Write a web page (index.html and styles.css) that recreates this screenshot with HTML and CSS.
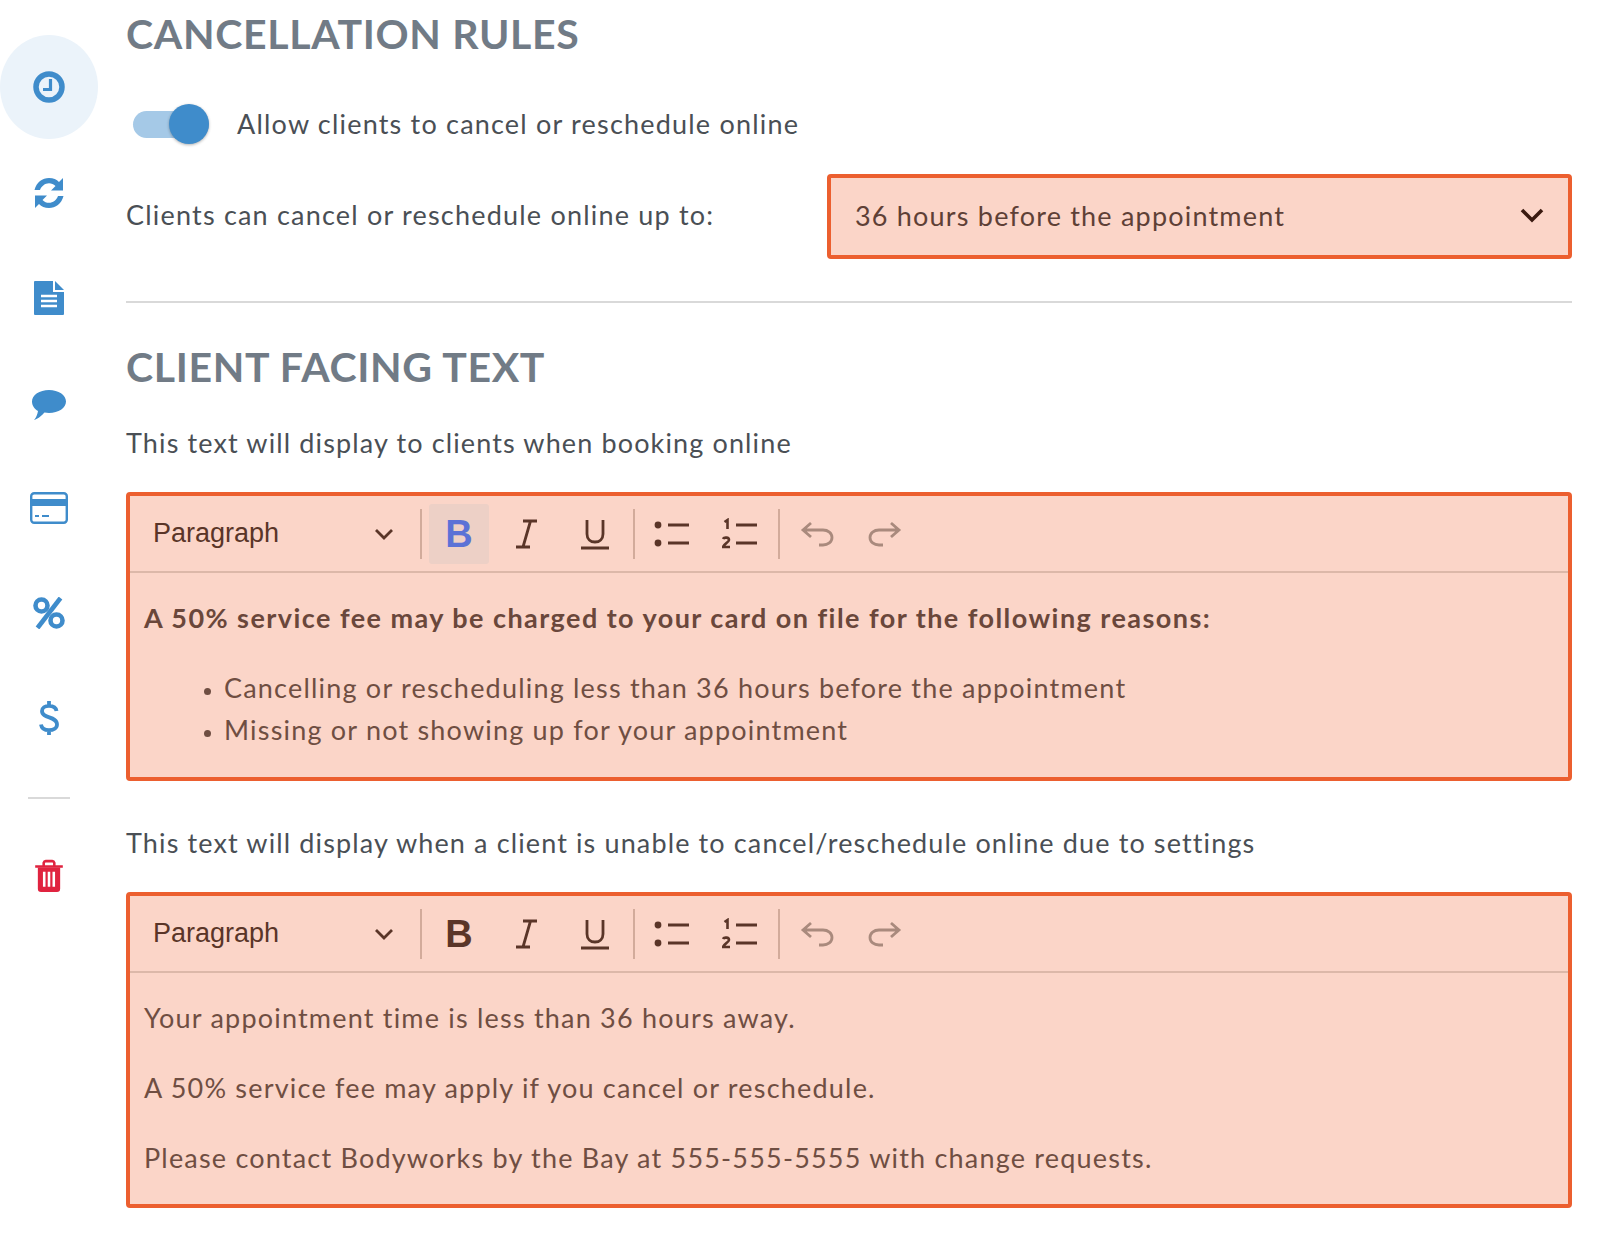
FILE: index.html
```html
<!DOCTYPE html>
<html lang="en">
<head>
<meta charset="utf-8">
<title>Cancellation rules</title>
<link rel="stylesheet" href="styles.css">
</head>
<body>
<div class="page">
  <nav class="side">
    <a class="nav-item active"><svg class="ic" viewBox="0 0 32 32"><circle cx="16" cy="16" r="13" fill="none" stroke="#3f8ccb" stroke-width="5.500"/><path d="M17.500 8v10.500H10" fill="none" stroke="#3f8ccb" stroke-width="3.200"/></svg></a>
    <a class="nav-item"><svg class="ic ic-sync" viewBox="0 0 32 32"><path d="M1.500 13C3.500 5 9.500 1 16 1c4.500 0 7.500 1.500 10 4L30 1v12.500H18l4.500-4.500C20.500 7 18.500 6.200 16 6.200c-4 0-7.500 2.800-9 6.800z" fill="#3f8ccb"/><path d="M30.500 19C28.500 27 22.500 31 16 31c-4.500 0-7.500-1.500-10-4l-4 4V18.500h12L9.500 23c2 2 4 2.800 6.500 2.800 4 0 7.500-2.800 9-6.800z" fill="#3f8ccb"/></svg></a>
    <a class="nav-item"><svg class="ic ic-doc" viewBox="0 0 32 36"><path d="M1 2a1 1 0 0 1 1-1h18v11h11v22a1 1 0 0 1-1 1H2a1 1 0 0 1-1-1z" fill="#3f8ccb"/><path d="M22 1l9 9h-9z" fill="#3f8ccb"/><path d="M8 16h16M8 21h16M8 26h16" stroke="#fff" stroke-width="2.400"/></svg></a>
    <a class="nav-item"><svg class="ic ic-wide" viewBox="0 -4 36 36"><path d="M18 1c9.500 0 17 5 17 11.500S27.500 24 18 24c-1.500 0-3 0-4.500-.4C11 26.500 7 30 3 31c2-2 3.500-5.500 4-9C3.500 20 1 16.500 1 12.500 1 6 8.500 1 18 1z" fill="#3f8ccb"/></svg></a>
    <a class="nav-item"><svg class="ic ic-card" viewBox="0 0 38 32"><rect x="1.200" y="1.200" width="35.600" height="29.600" rx="3" fill="none" stroke="#3f8ccb" stroke-width="2.400"/><rect x="1" y="7" width="36" height="7" fill="#3f8ccb"/><path d="M5 24h4M12 24h7" stroke="#3f8ccb" stroke-width="2.200"/></svg></a>
    <a class="nav-item"><svg class="ic" viewBox="0 0 32 32"><circle cx="8.500" cy="8.500" r="6" fill="none" stroke="#3f8ccb" stroke-width="4.600"/><circle cx="23.500" cy="23.500" r="6" fill="none" stroke="#3f8ccb" stroke-width="4.600"/><path d="M27.500 1L4.500 31" stroke="#3f8ccb" stroke-width="4.600"/></svg></a>
    <a class="nav-item"><svg class="ic ic-dollar" viewBox="0 0 20 36"><path d="M17.500 11C17 7.500 14 5.800 10 5.800c-4 0-7 2-7 5.200 0 8 15 4.800 15 13.500 0 3.500-3.500 5.700-8 5.700-4.500 0-7.500-2-8-5.700M10 1v5M10 30v5" fill="none" stroke="#3f8ccb" stroke-width="3.800"/></svg></a>
    <hr class="side-rule">
    <a class="nav-item trash"><svg class="ic ic-trash" viewBox="0 0 28 32"><path d="M1 7h26M9 7V3.500A2 2 0 0 1 11 2h6a2 2 0 0 1 2 1.500V7" fill="none" stroke="#e0233f" stroke-width="2.400"/><path d="M3.500 8h21v20a3 3 0 0 1-3 3h-15a3 3 0 0 1-3-3z" fill="#e0233f"/><path d="M9.500 12v14M14 12v14M18.500 12v14" stroke="#fff" stroke-width="2.400"/></svg></a>
  </nav>

  <main class="main">
    <h2 class="title first">CANCELLATION RULES</h2>
    <div class="toggle-row">
      <span class="toggle"><span class="knob"></span></span>
      <span class="txt">Allow clients to cancel or reschedule online</span>
    </div>
    <div class="select-row">
      <label class="txt">Clients can cancel or reschedule online up to:</label>
      <div class="select flag">
        <span>36 hours before the appointment</span>
        <svg class="sel-chev" viewBox="0 0 24 16"><path d="M2 3l10 10L22 3" fill="none" stroke="#3a1a10" stroke-width="3.600"/></svg>
      </div>
    </div>
    <hr class="rule">
    <h2 class="title">CLIENT FACING TEXT</h2>
    <p class="txt lead">This text will display to clients when booking online</p>

    <div class="editor flag">
      <div class="toolbar">
        <div class="para"><span>Paragraph</span><svg class="chev" viewBox="0 0 20 12"><path d="M2 2l8 8 8-8" fill="none" stroke="#5a3528" stroke-width="2.800"/></svg></div>
        <i class="sep"></i>
        <span class="tb on"><b class="bold">B</b></span>
        <span class="tb"><svg class="ti" viewBox="0 0 28 32"><path d="M10 3h14M3 29h14M17.500 3L10 29" fill="none" stroke="#5a3528" stroke-width="2.800"/></svg></span>
        <span class="tb"><svg class="ti" viewBox="0 0 28 32"><path d="M6 2v14c0 5 3.500 8 8 8s8-3 8-8V2M0 30h28" fill="none" stroke="#5a3528" stroke-width="2.800"/></svg></span>
        <i class="sep"></i>
        <span class="tb"><svg class="ti ti-list" viewBox="0 0 36 32"><circle cx="4" cy="7" r="3.400" fill="#5a3528"/><circle cx="4" cy="25" r="3.400" fill="#5a3528"/><path d="M14 7h21M14 25h21" stroke="#5a3528" stroke-width="2.800"/></svg></span>
        <span class="tb"><svg class="ti ti-list" viewBox="0 0 36 32"><path d="M2.500 4l3-2v9M1 21c1-2 6-2 6 1 0 2-5 4-6 7h7" fill="none" stroke="#5a3528" stroke-width="2.600"/><path d="M14 7h21M14 25h21" stroke="#5a3528" stroke-width="2.800"/></svg></span>
        <i class="sep"></i>
        <span class="tb off"><svg class="ti ti-list" viewBox="0 0 36 32"><path d="M11 5L3 12l8 7M3 12h20c5 0 9 3 9 7.500S28 27 23 27h-4" fill="none" stroke="#a98a7d" stroke-width="2.800"/></svg></span>
        <span class="tb off"><svg class="ti ti-list" viewBox="0 0 36 32"><path d="M25 5l8 7-8 7M33 12H13c-5 0-9 3-9 7.500S8 27 13 27h4" fill="none" stroke="#a98a7d" stroke-width="2.800"/></svg></span>
      </div>
      <div class="body one">
        <p class="strong">A 50% service fee may be charged to your card on file for the following reasons:</p>
        <ul>
          <li>Cancelling or rescheduling less than 36 hours before the appointment</li>
          <li>Missing or not showing up for your appointment</li>
        </ul>
      </div>
    </div>

    <p class="txt lead second">This text will display when a client is unable to cancel/reschedule online due to settings</p>

    <div class="editor flag">
      <div class="toolbar">
        <div class="para"><span>Paragraph</span><svg class="chev" viewBox="0 0 20 12"><path d="M2 2l8 8 8-8" fill="none" stroke="#5a3528" stroke-width="2.800"/></svg></div>
        <i class="sep"></i>
        <span class="tb"><b class="bold">B</b></span>
        <span class="tb"><svg class="ti" viewBox="0 0 28 32"><path d="M10 3h14M3 29h14M17.500 3L10 29" fill="none" stroke="#5a3528" stroke-width="2.800"/></svg></span>
        <span class="tb"><svg class="ti" viewBox="0 0 28 32"><path d="M6 2v14c0 5 3.500 8 8 8s8-3 8-8V2M0 30h28" fill="none" stroke="#5a3528" stroke-width="2.800"/></svg></span>
        <i class="sep"></i>
        <span class="tb"><svg class="ti ti-list" viewBox="0 0 36 32"><circle cx="4" cy="7" r="3.400" fill="#5a3528"/><circle cx="4" cy="25" r="3.400" fill="#5a3528"/><path d="M14 7h21M14 25h21" stroke="#5a3528" stroke-width="2.800"/></svg></span>
        <span class="tb"><svg class="ti ti-list" viewBox="0 0 36 32"><path d="M2.500 4l3-2v9M1 21c1-2 6-2 6 1 0 2-5 4-6 7h7" fill="none" stroke="#5a3528" stroke-width="2.600"/><path d="M14 7h21M14 25h21" stroke="#5a3528" stroke-width="2.800"/></svg></span>
        <i class="sep"></i>
        <span class="tb off"><svg class="ti ti-list" viewBox="0 0 36 32"><path d="M11 5L3 12l8 7M3 12h20c5 0 9 3 9 7.500S28 27 23 27h-4" fill="none" stroke="#a98a7d" stroke-width="2.800"/></svg></span>
        <span class="tb off"><svg class="ti ti-list" viewBox="0 0 36 32"><path d="M25 5l8 7-8 7M33 12H13c-5 0-9 3-9 7.500S8 27 13 27h4" fill="none" stroke="#a98a7d" stroke-width="2.800"/></svg></span>
      </div>
      <div class="body two">
        <p>Your appointment time is less than 36 hours away.</p>
        <p>A 50% service fee may apply if you cancel or reschedule.</p>
        <p>Please contact Bodyworks by the Bay at 555-555-5555 with change requests.</p>
      </div>
    </div>
  </main>
</div>
</body>
</html>
```

FILE: styles.css
```css
* { box-sizing: border-box; }
html, body { margin: 0; padding: 0; background: #fff; }
body { font-family: "Lato", "Liberation Sans", sans-serif; color: #4a4f55; width: 1600px; height: 1250px; overflow: hidden; }
.page { display: flex; }
.side { width: 98px; flex: none; padding-top: 35px; display: flex; flex-direction: column; align-items: center; }
.nav-item { width: 98px; height: 105px; display: flex; align-items: center; justify-content: center; border-radius: 50%; }
.nav-item.active { background: #ebf3fa; height: 104px; margin-bottom: 1px; }
.ic { width: 32px; height: 32px; display: block; }
.ic-doc { height: 36px; }
.ic-wide { width: 36px; height: 36px; }
.ic-card { width: 38px; }
.ic-dollar { width: 20px; height: 36px; }
.ic-trash { width: 30px; height: 34px; }
.side-rule { width: 42px; height: 2px; border: 0; background: #d9d9d9; margin: 27px 0 24px; }
.main { width: 1446px; margin-left: 28px; }
.title { margin: 0; font-size: 41px; line-height: 48px; font-weight: 700; color: #717b86; letter-spacing: .67px; }
.title.first { padding-top: 10px; }
.txt { font-size: 27px; line-height: 32px; letter-spacing: 1.2px; color: #4a4f55; }
.toggle-row { display: flex; align-items: center; margin-top: 46px; height: 40px; }
.toggle { width: 76px; height: 27px; margin-left: 7px; background: #a5c9e7; border-radius: 14px; position: relative; flex: none; }
.knob { position: absolute; right: 0; top: -7px; width: 40px; height: 40px; border-radius: 50%; background: #3f8ccb; box-shadow: 0 1px 3px rgba(0,0,0,.3); }
.toggle-row .txt { margin-left: 28px; }
.select-row { display: flex; align-items: center; justify-content: space-between; margin-top: 30px; }
.select-row label { margin-bottom: 3px; }
.flag { border: 4px solid #ec5f2f; background: #fbd5c8; border-radius: 4px; }
.select { width: 745px; height: 85px; display: flex; align-items: center; justify-content: space-between; padding: 0 24px 3px; font-size: 27px; letter-spacing: 1.2px; color: #5e4036; }
.sel-chev { width: 24px; height: 16px; }
.rule { border: 0; height: 2px; background: #d9d9d9; margin: 42px 0 0; }
.title:not(.first) { margin-top: 40px; }
.lead { margin: 36px 0 0; letter-spacing: 1.13px; }
.lead.second { margin-top: 46px; }
.editor { margin-top: 33px; }
.toolbar { display: flex; align-items: center; height: 77px; border-bottom: 2px solid #dcb8a9; padding: 0 0 0 23px; }
.para { width: 267px; flex: none; display: flex; align-items: center; justify-content: space-between; padding-right: 26px; font-family: "Liberation Sans", sans-serif; font-size: 27px; color: #5a3528; }
.chev { width: 20px; height: 12px; }
.sep { width: 2px; height: 50px; background: #d2ab9b; flex: none; margin-right: 7px; }
.tb { width: 60px; height: 60px; margin-right: 8px; display: flex; align-items: center; justify-content: center; border-radius: 3px; flex: none; }
.tb.on { background: #edd0c6; }
.bold { font-family: "Liberation Sans", sans-serif; font-weight: 700; font-size: 38px; color: #5a3528; line-height: 1; }
.on .bold { color: #5b72d6; }
.ti { width: 28px; height: 32px; }
.ti-list { width: 36px; }
.off { margin-right: 6px; }
.sep + .off { margin-left: 1px; }
.body { padding: 0 14px; font-size: 27px; letter-spacing: 1.2px; color: #6f4e42; }
.body p { margin: 0; line-height: 32px; }
.body.one { padding-top: 29px; height: 204px; }
.strong { font-weight: 700; color: #6a473b; letter-spacing: 1.45px; }
.body ul { margin: 33px 0 0; padding-left: 80px; }
.body li { line-height: 42px; }
.body li::marker { font-size: 20px; }
.body.two { padding-top: 29px; height: 231px; display: flex; flex-direction: column; gap: 38px; }
```
